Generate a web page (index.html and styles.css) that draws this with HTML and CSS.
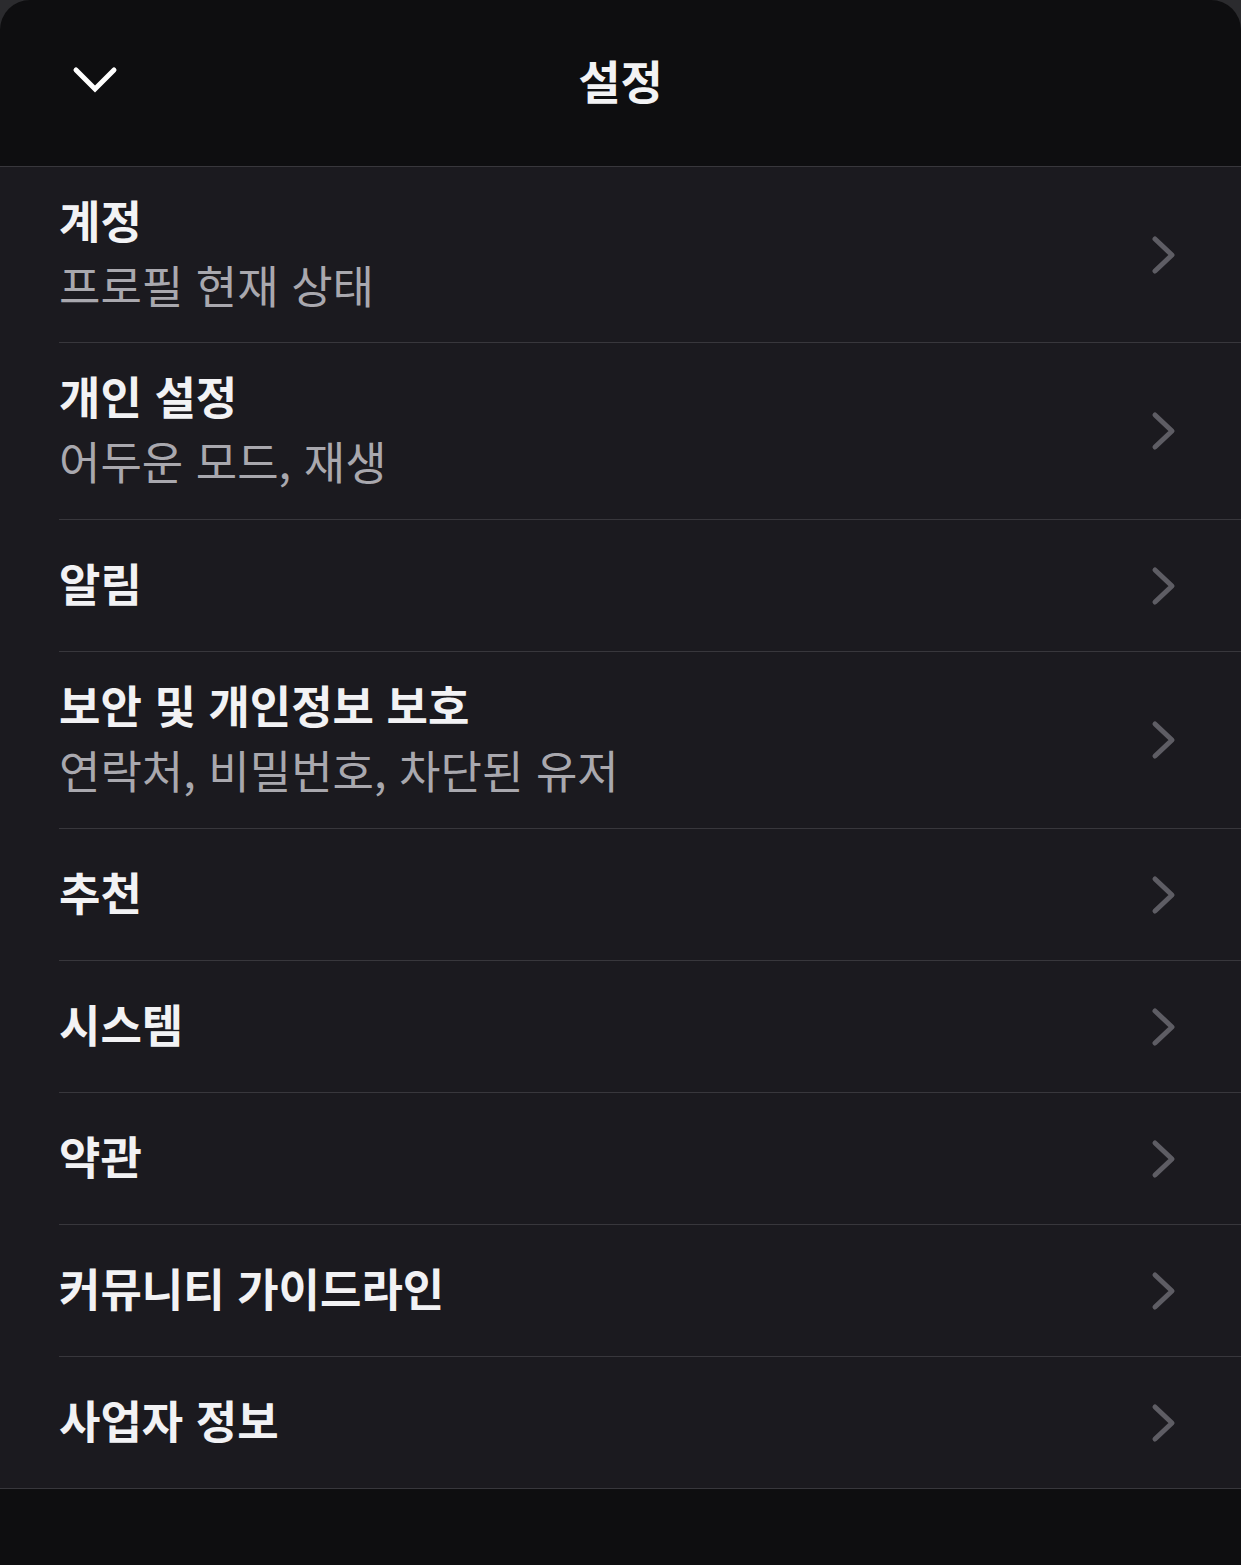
FILE: index.html
```html
<!DOCTYPE html>
<html lang="ko">
<head>
    <meta charset="UTF-8">
    <meta name="viewport" content="width=device-width, initial-scale=1.0">
    <title>설정</title>
    <link rel="stylesheet" href="styles.css">
</head>
<body>
    <div class="sheet">
        <!-- Header -->
        <header class="sheet-header">
            <button class="close-btn" aria-label="닫기">
                <svg width="46" height="30" viewBox="0 0 46 30">
                    <polyline points="4,5 23,24 42,5" fill="none" stroke="#ffffff" stroke-width="5" stroke-linecap="round" stroke-linejoin="miter"/>
                </svg>
            </button>
            <h1 class="sheet-title">설정</h1>
            <span></span>
        </header>

        <!-- Settings list -->
        <ul class="settings-list">
            <li class="settings-row">
                <div class="row-text">
                    <div class="row-title">계정</div>
                    <div class="row-sub">프로필 현재 상태</div>
                </div>
                <svg class="row-chevron" width="26" height="42" viewBox="0 0 26 42"><polyline points="4,5 21,21 4,37"/></svg>
            </li>
            <li class="settings-row">
                <div class="row-text">
                    <div class="row-title">개인 설정</div>
                    <div class="row-sub">어두운 모드, 재생</div>
                </div>
                <svg class="row-chevron" width="26" height="42" viewBox="0 0 26 42"><polyline points="4,5 21,21 4,37"/></svg>
            </li>
            <li class="settings-row">
                <div class="row-text">
                    <div class="row-title">알림</div>
                </div>
                <svg class="row-chevron" width="26" height="42" viewBox="0 0 26 42"><polyline points="4,5 21,21 4,37"/></svg>
            </li>
            <li class="settings-row">
                <div class="row-text">
                    <div class="row-title">보안 및 개인정보 보호</div>
                    <div class="row-sub">연락처, 비밀번호, 차단된 유저</div>
                </div>
                <svg class="row-chevron" width="26" height="42" viewBox="0 0 26 42"><polyline points="4,5 21,21 4,37"/></svg>
            </li>
            <li class="settings-row">
                <div class="row-text">
                    <div class="row-title">추천</div>
                </div>
                <svg class="row-chevron" width="26" height="42" viewBox="0 0 26 42"><polyline points="4,5 21,21 4,37"/></svg>
            </li>
            <li class="settings-row">
                <div class="row-text">
                    <div class="row-title">시스템</div>
                </div>
                <svg class="row-chevron" width="26" height="42" viewBox="0 0 26 42"><polyline points="4,5 21,21 4,37"/></svg>
            </li>
            <li class="settings-row">
                <div class="row-text">
                    <div class="row-title">약관</div>
                </div>
                <svg class="row-chevron" width="26" height="42" viewBox="0 0 26 42"><polyline points="4,5 21,21 4,37"/></svg>
            </li>
            <li class="settings-row">
                <div class="row-text">
                    <div class="row-title">커뮤니티 가이드라인</div>
                </div>
                <svg class="row-chevron" width="26" height="42" viewBox="0 0 26 42"><polyline points="4,5 21,21 4,37"/></svg>
            </li>
            <li class="settings-row">
                <div class="row-text">
                    <div class="row-title">사업자 정보</div>
                </div>
                <svg class="row-chevron" width="26" height="42" viewBox="0 0 26 42"><polyline points="4,5 21,21 4,37"/></svg>
            </li>
        </ul>
    </div>
</body>
</html>
```

FILE: styles.css
```css
html, body {
    margin: 0;
    padding: 0;
    height: 100%;
}

body {
    background-color: #2b2b2e;
    font-family: "Noto Sans CJK KR", "Noto Sans", sans-serif;
    color: #f2f2f4;
}

.sheet {
    min-height: 100%;
    background-color: #0e0e10;
    border-radius: 30px 30px 0 0;
    overflow: hidden;
}

.sheet-header {
    height: 166px;
    display: grid;
    grid-template-columns: 1fr auto 1fr;
    align-items: center;
    border-bottom: 1px solid #38373c;
}

.close-btn {
    justify-self: start;
    margin-left: 72px;
    margin-top: -6px;
    padding: 0;
    border: none;
    background: none;
    display: flex;
}

.sheet-title {
    margin: 0 0 8px;
    font-size: 46px;
    font-weight: 700;
    color: #f2f2f4;
    line-height: 1;
}

.settings-list {
    list-style: none;
    margin: 0;
    padding: 0;
    background-color: #1b1a1f;
    border-bottom: 1px solid #38373c;
}

.settings-row {
    display: flex;
    align-items: center;
    justify-content: space-between;
    min-height: 132px;
    box-sizing: border-box;
    margin-left: 59px;
    padding: 20px 64px 26px 0;
    border-bottom: 1px solid #38373c;
}

.settings-row:first-child {
    padding-bottom: 25px;
}

.settings-row:last-child {
    border-bottom: none;
    min-height: 131px;
}

.row-text {
    display: flex;
    flex-direction: column;
}

.row-title {
    font-size: 45px;
    font-weight: 700;
    line-height: 65px;
    color: #f2f2f4;
}

.row-sub {
    font-size: 45px;
    font-weight: 400;
    line-height: 65px;
    color: #a9a8ae;
}

.row-chevron {
    flex-shrink: 0;
    margin-top: 6px;
}

.row-chevron polyline {
    fill: none;
    stroke: #5e5d64;
    stroke-width: 5;
    stroke-linecap: round;
    stroke-linejoin: round;
}
```
